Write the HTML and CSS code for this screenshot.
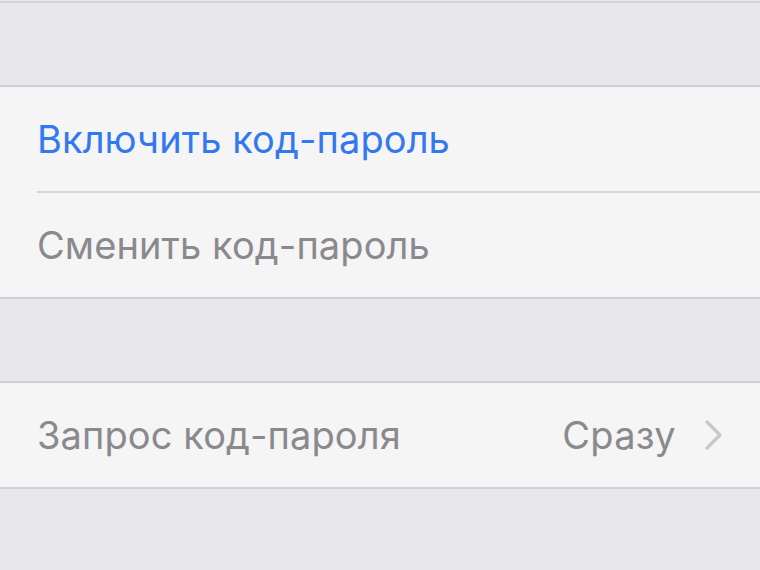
FILE: index.html
```html
<!DOCTYPE html>
<html lang="ru">
<head>
<meta charset="utf-8">
<link rel="stylesheet" href="styles.css">
</head>
<body>
<div class="topline"></div>
<div class="spacer"></div>
<section class="group">
  <div class="row"><span class="label blue">Включить код-пароль</span></div>
  <div class="sep"></div>
  <div class="row"><span class="label">Сменить код-пароль</span></div>
</section>
<div class="spacer"></div>
<section class="group">
  <div class="row">
    <span class="label">Запрос код-пароля</span>
    <span class="value">Сразу</span>
    <svg class="chev" width="20" height="32" viewBox="0 0 20 32"><path d="M3 3 L16 16 L3 29" fill="none" stroke="#c7c7cc" stroke-width="3.2" stroke-linecap="round" stroke-linejoin="round"/></svg>
  </div>
</section>
</body>
</html>
```
FILE: styles.css
```css
html, body {
  margin: 0;
  padding: 0;
  background: #e8e7ec;
  font-family: Inter, "Noto Sans", sans-serif;
}
.topline {
  margin-top: 1px;
  height: 2px;
  background: #d3d2d7;
}
.spacer {
  height: 82px;
}
.group {
  background: #f5f5f5;
  border-top: 2px solid #d1d0d4;
  border-bottom: 2px solid #d1d0d4;
}
.row {
  height: 104px;
  display: flex;
  align-items: center;
  padding-left: 37px;
  padding-right: 36px;
}
.sep {
  height: 2px;
  margin-left: 37px;
  background: #d6d6da;
}
.label {
  font-size: 38px;
  font-weight: 370;
  color: #8a8a8e;
  flex: 1;
  letter-spacing: 0.1px;
}
.label.blue {
  color: #3478f0;
}
.value {
  font-size: 38px;
  font-weight: 370;
  color: #8a8a8e;
  margin-right: 28px;
  letter-spacing: 0.3px;
}
.chev {
  display: block;
}
```
